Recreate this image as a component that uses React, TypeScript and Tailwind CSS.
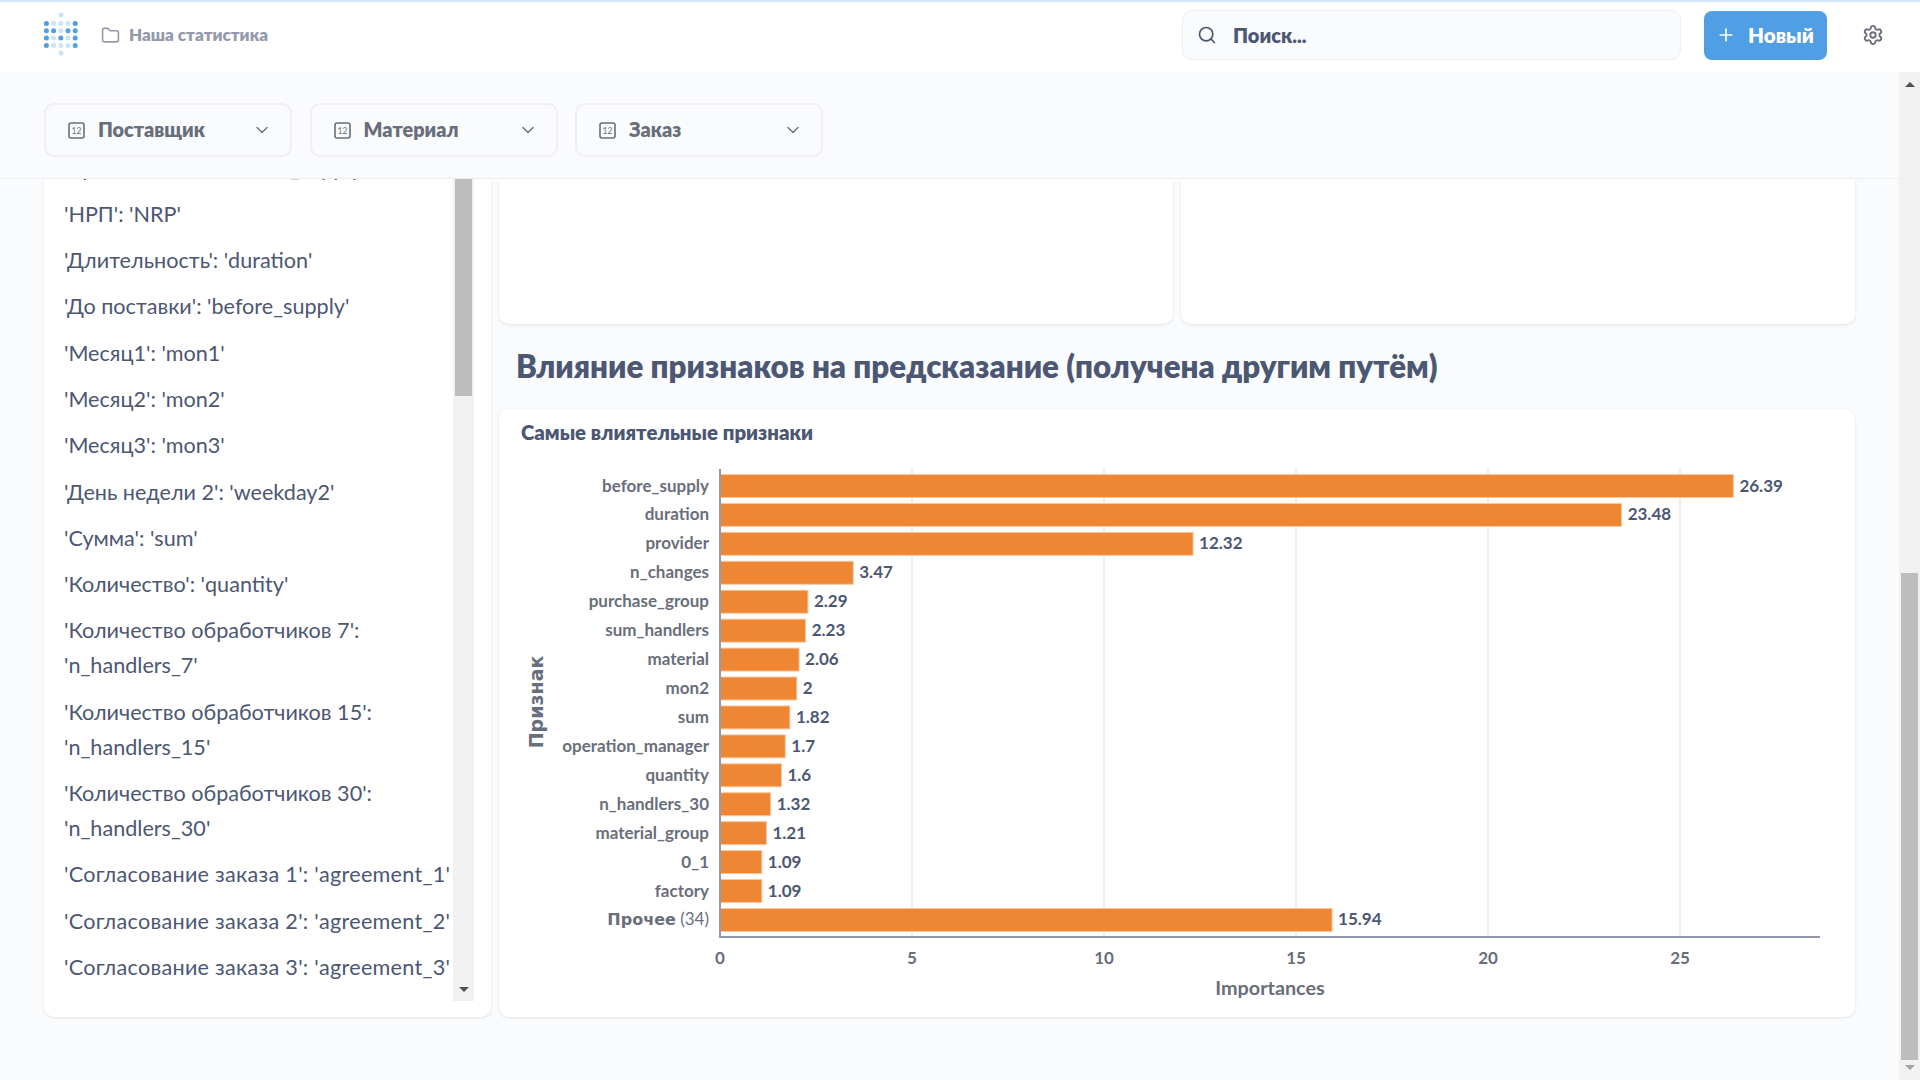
import { ChevronDown, Folder, Plus, Search, Settings } from 'lucide-react';

const bars: { name: string; value: number }[] = [
  { name: 'before_supply', value: 26.39 },
  { name: 'duration', value: 23.48 },
  { name: 'provider', value: 12.32 },
  { name: 'n_changes', value: 3.47 },
  { name: 'purchase_group', value: 2.29 },
  { name: 'sum_handlers', value: 2.23 },
  { name: 'material', value: 2.06 },
  { name: 'mon2', value: 2 },
  { name: 'sum', value: 1.82 },
  { name: 'operation_manager', value: 1.7 },
  { name: 'quantity', value: 1.6 },
  { name: 'n_handlers_30', value: 1.32 },
  { name: 'material_group', value: 1.21 },
  { name: '0_1', value: 1.09 },
  { name: 'factory', value: 1.09 },
];

const items = [
  "'Время поставки': 'time_supply'",
  "'НРП': 'NRP'",
  "'Длительность': 'duration'",
  "'До поставки': 'before_supply'",
  "'Месяц1': 'mon1'",
  "'Месяц2': 'mon2'",
  "'Месяц3': 'mon3'",
  "'День недели 2': 'weekday2'",
  "'Сумма': 'sum'",
  "'Количество': 'quantity'",
  "'Количество обработчиков 7': 'n_handlers_7'",
  "'Количество обработчиков 15': 'n_handlers_15'",
  "'Количество обработчиков 30': 'n_handlers_30'",
  "'Согласование заказа 1': 'agreement_1'",
  "'Согласование заказа 2': 'agreement_2'",
  "'Согласование заказа 3': 'agreement_3'",
];

const Logo = () => {
  const rows = ['10001', '11011', '10101', '10001'];
  return (
    <svg width="36" height="46" viewBox="0 0 36 46">
      <circle cx="18" cy="3" r="2.5" fill="#cde3f6" />
      <circle cx="18" cy="41" r="2.5" fill="#cde3f6" />
      {rows.map((row, r) =>
        row.split('').map((c, i) => (
          <circle
            key={`${r}-${i}`}
            cx={3.4 + i * 7.2}
            cy={11.5 + r * 7.3}
            r="2.5"
            fill={c === '1' ? '#509ee3' : '#cde3f6'}
          />
        )),
      )}
    </svg>
  );
};

const NumberIcon = () => (
  <svg width="17" height="17" viewBox="0 0 17 17" className="shrink-0">
    <rect x="1" y="1" width="15" height="15" rx="2" fill="none" stroke="#696e7b" strokeWidth="1.6" />
    <text x="8.5" y="11.6" textAnchor="middle" fontSize="8.5" fill="#696e7b" fontFamily="Lato, sans-serif">
      12
    </text>
  </svg>
);

const FilterButton = ({ label }: { label: string }) => (
  <div className="flex h-[54px] w-[248px] items-center rounded-[10px] border-2 border-[#f0f0f3] pl-[22px] pr-[18px]">
    <NumberIcon />
    <span className="ml-[13px] text-[19.8px] font-extrabold text-[#696e7b]">{label}</span>
    <ChevronDown className="ml-auto h-[20px] w-[20px] text-[#696e7b]" strokeWidth={1.5} />
  </div>
);

const X0 = 221;
const UNIT = 38.4;
const Y0 = 14;
const PITCH = 28.93;

const Chart = () => {
  const rows = [...bars, { name: '', value: 15.94 }];
  return (
    <svg width="1356" height="557" viewBox="0 0 1356 557" fontFamily="Lato, sans-serif" className="block">
      {[5, 10, 15, 20, 25].map((t) => (
        <line key={t} x1={X0 + t * UNIT} x2={X0 + t * UNIT} y1="9" y2="477" stroke="#edeef0" strokeWidth="2" />
      ))}
      {rows.map((b, i) => {
        const top = Y0 + i * PITCH;
        const mid = top + 11;
        return (
          <g key={i}>
            <rect
              x={X0 + 0.5}
              y={top + 0.5}
              width={b.value * UNIT - 0.5}
              height="23"
              fill="#ef8633"
              stroke="#f7c8a2"
              strokeWidth="1"
            />
            <text
              x={X0 + b.value * UNIT + 6}
              y={mid}
              dominantBaseline="central"
              fontSize="17"
              fontWeight="700"
              fill="#4c5773"
            >
              {b.value}
            </text>
            {b.name && (
              <text x="210" y={mid} textAnchor="end" dominantBaseline="central" fontSize="17" fontWeight="700" fill="#696e7b">
                {b.name}
              </text>
            )}
          </g>
        );
      })}
      <text x="210" y={Y0 + 15 * PITCH + 11} textAnchor="end" dominantBaseline="central" fontSize="17" fill="#696e7b">
        <tspan fontWeight="700" fontSize="16" fontFamily="'DejaVu Sans', sans-serif">Прочее</tspan> (34)
      </text>
      <line x1={X0} x2={X0} y1="9" y2="478" stroke="#949aab" strokeWidth="2" />
      <line x1={X0 - 1} x2="1321" y1="477" y2="477" stroke="#949aab" strokeWidth="2" />
      {[0, 5, 10, 15, 20, 25].map((t) => (
        <text
          key={t}
          x={X0 + t * UNIT}
          y="497"
          textAnchor="middle"
          dominantBaseline="central"
          fontSize="17"
          fontWeight="700"
          fill="#696e7b"
        >
          {t}
        </text>
      ))}
      <text x="771" y="527" textAnchor="middle" dominantBaseline="central" fontSize="19.8" fontWeight="700" fill="#696e7b">
        Importances
      </text>
      <text
        transform="translate(37 242) rotate(-90)"
        textAnchor="middle"
        dominantBaseline="central"
        fontSize="19"
        fontWeight="700"
        fill="#696e7b"
        fontFamily="'DejaVu Sans', sans-serif"
      >
        Признак
      </text>
    </svg>
  );
};

export default function App() {
  return (
    <div className="flex h-screen w-full flex-col overflow-hidden bg-[#f9fbfc] font-['Lato',sans-serif]">
      {/* Top nav */}
      <header className="flex h-[72px] shrink-0 items-center border-t-2 border-[#d3e7f8] bg-white pb-[4px] pl-[43px] pr-[36px]">
        <Logo />
        <Folder className="ml-[22px] h-[19px] w-[19px] text-[#949aab]" strokeWidth={2} />
        <span className="ml-[9px] text-[17px] font-extrabold text-[#949aab]">Наша статистика</span>
        <div className="ml-auto flex h-[50px] w-[499px] items-center rounded-[10px] border border-[#eceff3] bg-[#f9fbfc] pl-[14px]">
          <Search className="h-[20px] w-[20px] text-[#4c5773]" strokeWidth={2} />
          <span className="ml-[16px] text-[20px] font-extrabold text-[#4c5773]">Поиск...</span>
        </div>
        <div className="ml-[23px] flex h-[49px] w-[123px] items-center rounded-[8px] bg-[#509ee3] pl-[12px]">
          <Plus className="h-[20px] w-[20px] text-white" strokeWidth={2} />
          <span className="ml-[12px] text-[20.6px] font-extrabold text-white">Новый</span>
        </div>
        <Settings className="ml-[35px] h-[22px] w-[22px] text-[#696e7b]" strokeWidth={2} />
      </header>

      <div className="flex min-h-0 flex-1">
        <main className="flex min-w-0 flex-1 flex-col">
          {/* Filters */}
          <div className="flex h-[107px] shrink-0 items-center gap-[17.5px] border-b border-[#eeeff2] pl-[44px] pt-[10px]">
            <FilterButton label="Поставщик" />
            <FilterButton label="Материал" />
            <FilterButton label="Заказ" />
          </div>

          <div className="flex min-h-0 flex-1 gap-[8px] pb-[63px] pl-[44px] pr-[44px]">
            {/* Text card */}
            <div className="flex h-full w-[447px] shrink-0 rounded-b-[10px] bg-white pb-[16px] pr-[17px] shadow-[0_1px_3px_rgba(0,0,0,0.1)]">
              <div className="min-w-0 flex-1 overflow-hidden pl-[20px]">
                <ul className="-mt-[28.5px] text-[21.6px] leading-[35px] text-[#4c5773]">
                  {items.map((t) => (
                    <li key={t} className={t.includes('agreement') ? 'mb-[11.3px] tracking-[0.28px]' : 'mb-[11.3px]'}>
                      {t}
                    </li>
                  ))}
                </ul>
              </div>
              <div className="flex w-[21px] shrink-0 flex-col items-center bg-[#f1f1f1]">
                <div className="h-[217px] w-[17px] bg-[#bdbdbd]" />
                <div className="mb-[9px] mt-auto h-0 w-0 border-x-[5px] border-t-[5px] border-x-transparent border-t-[#505050]" />
              </div>
            </div>

            <div className="flex min-w-0 flex-1 flex-col">
              {/* Empty cards, scrolled under the filter bar */}
              <div className="flex h-[145px] shrink-0 gap-[8px]">
                <div className="flex-1 rounded-b-[10px] bg-white shadow-[0_1px_3px_rgba(0,0,0,0.1)]" />
                <div className="flex-1 rounded-b-[10px] bg-white shadow-[0_1px_3px_rgba(0,0,0,0.1)]" />
              </div>
              <h2 className="flex h-[85px] shrink-0 items-center pl-[17px] text-[31.3px] font-extrabold text-[#4c5773]">
                Влияние признаков на предсказание (получена другим путём)
              </h2>
              <div className="min-h-0 flex-1 rounded-[10px] bg-white shadow-[0_1px_3px_rgba(0,0,0,0.1)]">
                <div className="h-[51px] pl-[22px] pt-[9px] text-[20.35px] font-extrabold leading-[28px] text-[#4c5773]">
                  Самые влиятельные признаки
                </div>
                <Chart />
              </div>
            </div>
          </div>
        </main>

        {/* Page scrollbar */}
        <div className="flex w-[21px] shrink-0 flex-col items-center bg-[#f1f1f1]">
          <div className="mt-[10px] h-0 w-0 border-x-[5px] border-b-[5px] border-x-transparent border-b-[#505050]" />
          <div className="mt-[486px] h-[487px] w-[17px] bg-[#bdbdbd]" />
          <div className="mt-[5px] h-0 w-0 border-x-[5px] border-t-[5px] border-x-transparent border-t-[#a3a3a3]" />
        </div>
      </div>
    </div>
  );
}
